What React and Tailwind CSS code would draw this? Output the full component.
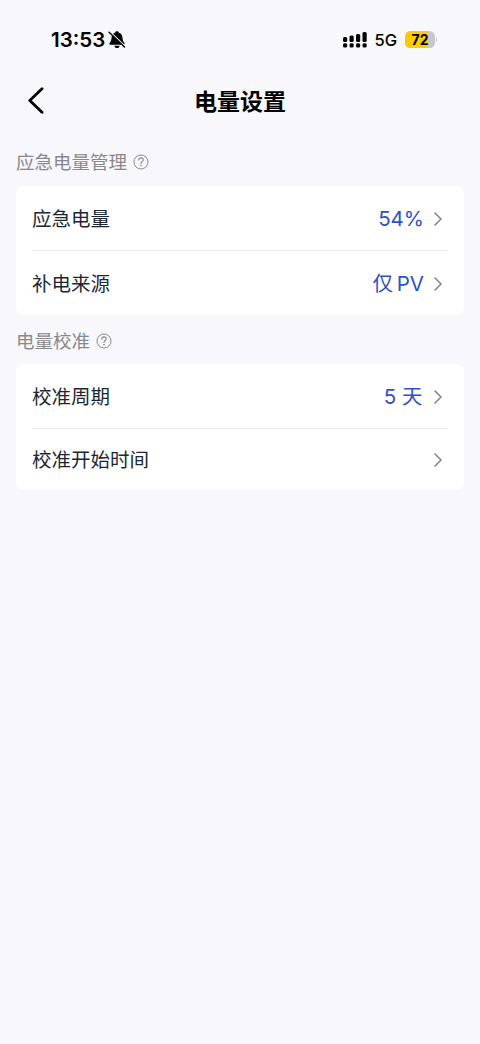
const sections = [
  {
    title: "应急电量管理",
    headerHeight: "h-[50px]",
    rows: [
      {
        label: "应急电量",
        value: "54%",
        height: "h-[65px]",
        spacing: "mr-[9px]",
      },
      {
        label: "补电来源",
        value: "仅 PV",
        height: "h-[64px]",
        spacing: "mr-[9px] [word-spacing:-2px]",
      },
    ],
  },
  {
    title: "电量校准",
    headerHeight: "h-[49px]",
    rows: [
      {
        label: "校准周期",
        value: "5 天",
        height: "h-[65px]",
        spacing: "mr-[10.500px]",
      },
      {
        label: "校准开始时间",
        value: "",
        height: "h-[61px]",
        spacing: "mr-[10px]",
      },
    ],
  },
];

const BellOffIcon = () => (
  <svg width="18" height="18" viewBox="0 0 18 18" className="shrink-0">
    <path
      d="M9 .2c.9 0 1.600.5 1.700 1.200 2.200.6 3.600 2.500 3.700 4.900.1 2.800.7 4.200 1.900 5.400.7.800.4 2-.7 2H2.400c-1.100 0-1.400-1.200-.7-2C2.900 10.500 3.500 9.100 3.600 6.300c.1-2.400 1.500-4.300 3.700-4.900C7.400.7 8.100.2 9 .2z"
      fill="#000"
    />
    <path
      d="M6.400 14.700h5.200c-.2 1.400-1.200 2.300-2.600 2.300s-2.400-.9-2.600-2.300z"
      fill="#000"
    />
    <path d="M2 .7l15 14.600" stroke="#f7f7fc" strokeWidth="1.500" />
    <path
      d="M1.100 1.200l15.400 14.900"
      stroke="#000"
      strokeWidth="1.400"
      strokeLinecap="round"
    />
  </svg>
);

const SignalIcon = () => (
  <svg width="24" height="18" viewBox="0.5 0 24 18" className="shrink-0">
    <rect x="0.500" y="6" width="4.200" height="5" rx="1.500" />
    <rect x="7" y="4.500" width="4.200" height="6.500" rx="1.500" />
    <rect x="13.500" y="3" width="4.200" height="8" rx="1.500" />
    <rect x="20" y="1" width="4.200" height="10" rx="1.500" />
    <rect x="0.500" y="12.300" width="4.200" height="4.300" rx="1.500" />
    <rect x="7" y="12.300" width="4.200" height="4.300" rx="1.500" />
    <rect x="13.500" y="12.300" width="4.200" height="4.300" rx="1.500" />
    <rect x="20" y="12.300" width="4.200" height="4.300" rx="1.500" />
  </svg>
);

const Battery = ({ level }) => (
  <div className="flex items-center">
    <div className="relative flex h-[17px] w-[30px] items-center justify-center overflow-hidden rounded-[5.500px] bg-[#c8c8cc]">
      <div
        className="absolute inset-y-0 left-0 bg-[#ffcc00]"
        style={{ width: `${level}%` }}
      />
      <span className="relative pt-px text-[14px] leading-none font-bold text-black">
        {level}
      </span>
    </div>
    <div className="ml-px h-[5px] w-[1px] rounded-r-full bg-[#c8c8cc]" />
  </div>
);

const StatusBar = () => (
  <div className="flex h-[79px] items-center justify-between pl-[51px] pr-[43px]">
    <div className="flex items-center gap-[3px]">
      <span className="pt-px text-[20.500px] leading-none font-semibold text-black">
        13:53
      </span>
      <BellOffIcon />
    </div>
    <div className="flex items-center">
      <SignalIcon />
      <span className="ml-[7px] mr-[8px] pt-px text-[16.500px] leading-none font-medium text-black">
        5G
      </span>
      <Battery level={72} />
    </div>
  </div>
);

const HelpIcon = () => (
  <svg
    width="16"
    height="16"
    viewBox="0 0 16 16"
    fill="none"
    stroke="#88888d"
    className="mt-[2px] shrink-0"
  >
    <circle cx="8" cy="8" r="7" strokeWidth="1" />
    <path
      d="M5.800 6.100c0-1.300.9-2.200 2.200-2.200s2.200.8 2.200 2c0 1.600-2.200 1.700-2.200 3.500"
      strokeWidth="1.100"
      strokeLinecap="round"
    />
    <circle cx="8" cy="11.600" r=".8" fill="#88888d" stroke="none" />
  </svg>
);

const ChevronIcon = () => (
  <svg
    width="10"
    height="16"
    viewBox="0 0 10 16"
    fill="none"
    stroke="#85868c"
    strokeWidth="1.600"
    strokeLinecap="round"
    strokeLinejoin="round"
    className="shrink-0"
  >
    <path d="M2 2l6 6-6 6" />
  </svg>
);

const Row = ({ label, value, height, spacing }) => (
  <div className={`flex items-center ${height}`}>
    <span className="pt-[3px] text-[19.500px] text-[#1b2735]">{label}</span>
    <span className={`ml-auto pt-[2px] text-[20.500px] text-[#2f4fc8] ${spacing}`}>
      {value}
    </span>
    <div className="mr-[5px] pt-px">
      <ChevronIcon />
    </div>
  </div>
);

const App = () => {
  return (
    <div className="min-h-screen w-full bg-[#f7f7fc] font-[Inter,'Noto_Sans_CJK_SC',sans-serif]">
      <StatusBar />
      <header className="grid h-[44px] grid-cols-[80px_1fr_80px] items-center">
        <button className="pl-[27px]">
          <svg
            width="18"
            height="28"
            viewBox="0 0 18 28"
            fill="none"
            stroke="#000"
            strokeWidth="2.800"
            strokeLinecap="round"
            strokeLinejoin="round"
          >
            <path d="M15 1.700L2.800 13.500 15 25.300" />
          </svg>
        </button>
        <h1 className="pt-[3px] text-center text-[23px] font-bold text-black">
          电量设置
        </h1>
      </header>
      <main className="px-4 pt-[13px]">
        {sections.map((section) => (
          <section key={section.title}>
            <div
              className={`flex items-center gap-[6px] ${section.headerHeight}`}
            >
              <h2 className="pt-[4px] text-[18.500px] text-[#88888d]">
                {section.title}
              </h2>
              <HelpIcon />
            </div>
            <div className="divide-y divide-[#ededf0] rounded-lg bg-white px-4">
              {section.rows.map((row) => (
                <Row key={row.label} {...row} />
              ))}
            </div>
          </section>
        ))}
      </main>
    </div>
  );
};

export default App;
